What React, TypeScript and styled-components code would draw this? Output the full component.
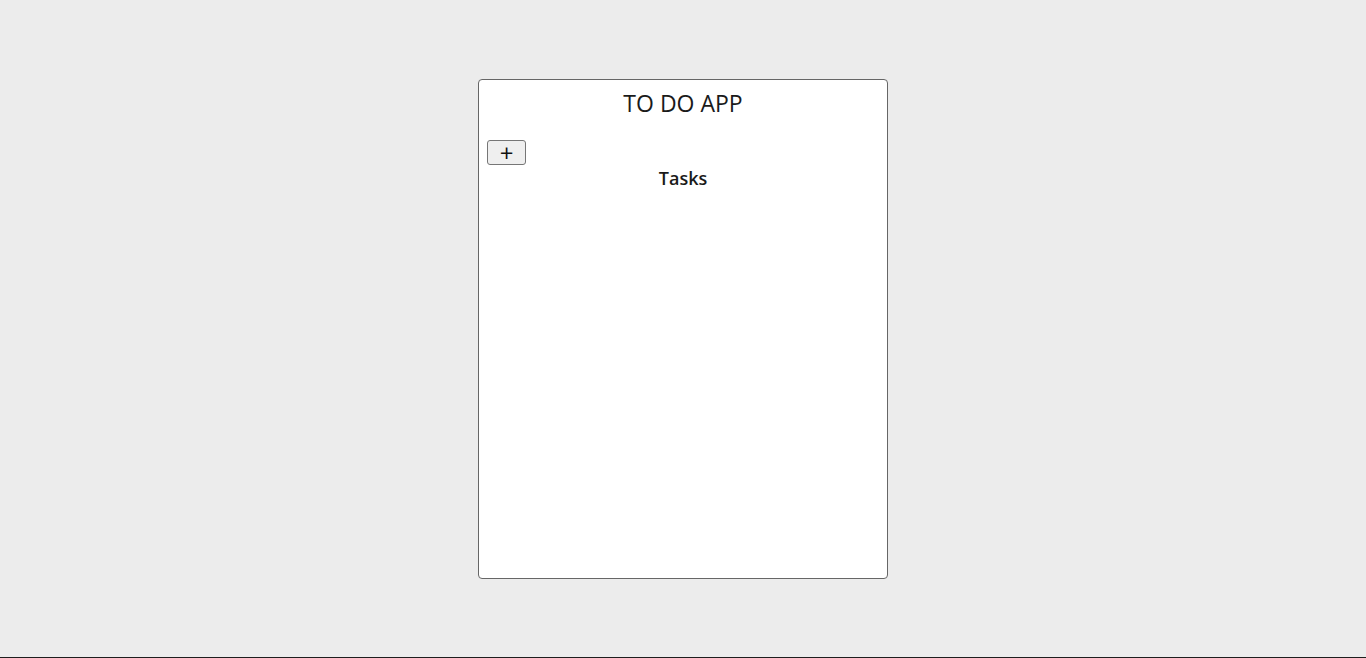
import styled, { createGlobalStyle } from "styled-components";

const GlobalStyle = createGlobalStyle`
  html, body {
    margin: 0;
    padding: 0;
    background-color: #ececec;
    font-family: "Open Sans", "Noto Sans", sans-serif;
    color: #1a1a1a;
  }
`;

const Page = styled.div`
  height: 657px;
  border-bottom: 1px solid #1e1e1e;
  display: flex;
  align-items: center;
  justify-content: center;
`;

const Card = styled.div`
  box-sizing: border-box;
  width: 410px;
  height: 500px;
  margin-top: 1px;
  background-color: #ffffff;
  border: 1px solid #666666;
  border-radius: 4px;
  padding: 8px 8px;
  display: flex;
  flex-direction: column;
`;

const Title = styled.h1`
  margin: 0;
  font-size: 23px;
  font-weight: 500;
  line-height: 30px;
  text-align: center;
`;

const AddButton = styled.button`
  align-self: flex-start;
  margin-top: 22px;
  width: 39px;
  height: 25px;
  padding: 0;
  background-color: #efefef;
  border: 1px solid #767676;
  border-radius: 3px;
  font-family: "Open Sans", sans-serif;
  font-size: 24px;
  font-weight: 400;
  line-height: 20px;
  color: #111;
`;

const SectionTitle = styled.h2`
  margin: 0;
  font-size: 18px;
  font-weight: 600;
  line-height: 26px;
  text-align: center;
`;

export default function App() {
  return (
    <>
      <GlobalStyle />
      <Page>
        <Card>
          <Title>TO DO APP</Title>
          <AddButton>+</AddButton>
          <SectionTitle>Tasks</SectionTitle>
        </Card>
      </Page>
    </>
  );
}
